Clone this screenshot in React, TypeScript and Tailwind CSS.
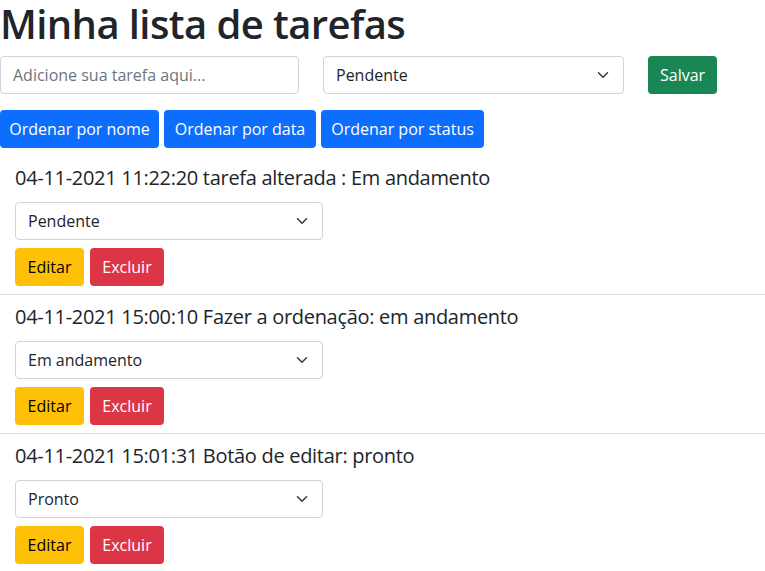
import React from 'react';

const Chevron = () => (
  <svg width="12" height="12" viewBox="0 0 16 16" className="mr-[2px] shrink-0">
    <path d="m2 5 6 6 6-6" fill="none" stroke="#343a40" strokeWidth="2" strokeLinecap="round" strokeLinejoin="round" />
  </svg>
);

const SelectBox = ({ value, width }: { value: string; width: string }) => (
  <div
    className={`flex h-[38px] items-center justify-between rounded-[4px] border border-[#ced4da] bg-white pl-[12px] pr-[12px] text-[16px] text-[#212529] ${width}`}
  >
    <span>{value}</span>
    <Chevron />
  </div>
);

const tarefas = [
  { texto: '04-11-2021 11:22:20 tarefa alterada : Em andamento', status: 'Pendente' },
  { texto: '04-11-2021 15:00:10 Fazer a ordenação: em andamento', status: 'Em andamento' },
  { texto: '04-11-2021 15:01:31 Botão de editar: pronto', status: 'Pronto' },
];

export default function App() {
  return (
    <div className="min-h-[571px] bg-white text-[#212529]" style={{ fontFamily: '"Open Sans", "Noto Sans", sans-serif' }}>
      <h1 className="m-0 mb-[8px] text-[40px] font-semibold leading-[48px] tracking-[-0.6px]">Minha lista de tarefas</h1>

      <div className="flex items-center">
        <div className="flex h-[38px] w-[299px] items-center rounded-[4px] border border-[#ced4da] px-[12px] text-[16px] text-[#6c757d]">
          Adicione sua tarefa aqui...
        </div>
        <div className="ml-[24px]">
          <SelectBox value="Pendente" width="w-[301px]" />
        </div>
        <button className="ml-[24px] h-[38px] rounded-[4px] bg-[#198754] px-[12px] text-[16px] text-white">Salvar</button>
      </div>

      <div className="mt-[16px] flex gap-[5px]">
        <button className="h-[38px] w-[159px] rounded-[4px] bg-[#0d6efd] text-[16px] text-white">Ordenar por nome</button>
        <button className="h-[38px] w-[152px] rounded-[4px] bg-[#0d6efd] text-[16px] text-white">Ordenar por data</button>
        <button className="h-[38px] w-[163px] rounded-[4px] bg-[#0d6efd] text-[16px] text-white">Ordenar por status</button>
      </div>

      <div className="mt-[8px]">
        {tarefas.map((t, i) => (
          <div key={i} className="border-b border-[#dee2e6] px-[15px] pb-[8px] pt-[10px]">
            <h5 className="mb-[12px] text-[20px] font-normal leading-[24px] tracking-[-0.3px]">{t.texto}</h5>
            <SelectBox value={t.status} width="w-[308px]" />
            <div className="mt-[8px] flex gap-[6px]">
              <button className="h-[38px] w-[69px] rounded-[4px] bg-[#ffc107] text-[16px] text-black">Editar</button>
              <button className="h-[38px] w-[74px] rounded-[4px] bg-[#dc3545] text-[16px] text-white">Excluir</button>
            </div>
          </div>
        ))}
      </div>
    </div>
  );
}
